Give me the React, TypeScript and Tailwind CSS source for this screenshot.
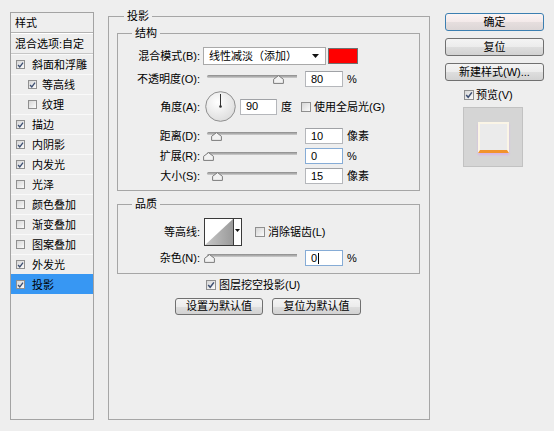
import React from "react";

function Check({ checked, small }: { checked?: boolean; small?: boolean }) {
  return (
    <span
      className={
        (small ? "w-[9px] h-[9px]" : "w-[10px] h-[10px]") +
        " shrink-0 border border-[#8f8f8f] bg-linear-to-br from-[#d6d6d6] to-[#fbfbfb] flex items-center justify-center"
      }
    >
      {checked && (
        <svg width="8" height="8" viewBox="0 0 8 8">
          <path d="M1.2 4 L3.2 6.3 L6.9 1.4" fill="none" stroke="#3d4f72" strokeWidth="1.5" />
        </svg>
      )}
    </span>
  );
}

function Slider({ pos }: { pos: number }) {
  return (
    <div className="relative w-[90px] h-[16px] shrink-0">
      <div className="absolute left-0 right-0 top-[4px] h-[3px] rounded-l-full bg-linear-to-b from-[#8a8a8a] to-[#cfcfcf]" />
      <svg className="absolute top-[4px]" style={{ left: pos }} width="11" height="9" viewBox="0 0 11 9">
        <path d="M5.5 0.6 L10.4 4.3 L10.4 8.4 L0.6 8.4 L0.6 4.3 Z" fill="#f2f2f2" stroke="#7a7a7a" />
      </svg>
    </div>
  );
}

function Box({ v, wide = true, focus, caret }: { v: string; wide?: boolean; focus?: boolean; caret?: boolean }) {
  return (
    <div
      className={
        (wide ? "w-[38px]" : "w-[37px]") +
        " h-[16px] shrink-0 bg-white border pl-[5px] flex items-center leading-none " +
        (focus ? "border-[#86acd6]" : "border-[#b5b7bb] border-t-[#a0a2a6]")
      }
    >
      <span>{v}</span>
      {caret && <span className="w-px h-[11px] bg-black ml-px" />}
    </div>
  );
}

function Btn({ children, w, primary }: { children: React.ReactNode; w: string; primary?: boolean }) {
  return (
    <div
      className={
        w +
        " shrink-0 rounded-[3px] border flex items-center justify-center leading-none " +
        (primary
          ? "border-[#3c7fb1] bg-[linear-gradient(to_bottom,#fbf4f4_0%,#f3e9e9_50%,#e6dede_51%,#dcd6d6_100%)]"
          : "border-[#707070] bg-[linear-gradient(to_bottom,#f4f4f4_0%,#ececec_50%,#dedede_51%,#d2d2d2_100%)]")
      }
    >
      {children}
    </div>
  );
}

const styles: { name: string; checked: boolean; indent?: boolean; selected?: boolean }[] = [
  { name: "斜面和浮雕", checked: true },
  { name: "等高线", checked: true, indent: true },
  { name: "纹理", checked: false, indent: true },
  { name: "描边", checked: true },
  { name: "内阴影", checked: true },
  { name: "内发光", checked: true },
  { name: "光泽", checked: false },
  { name: "颜色叠加", checked: false },
  { name: "渐变叠加", checked: false },
  { name: "图案叠加", checked: false },
  { name: "外发光", checked: true },
  { name: "投影", checked: true, selected: true },
];

export default function App() {
  return (
    <div className="w-[554px] h-[431px] bg-[#eeeeee] flex items-start text-[11px] leading-[14px] text-black font-['Liberation_Sans','Noto_Sans_CJK_SC',sans-serif] overflow-hidden">
      {/* Left styles list */}
      <div className="ml-[10px] mt-[12px] w-[84px] h-[408px] border border-[#a3a3a3] flex flex-col shrink-0">
        <div className="h-[20px] pl-[4px] flex items-center border-b border-[#b2b2b2]">样式</div>
        <div className="h-[21px] pl-[4px] flex items-center border-t border-white border-b border-b-[#c6c6c6]">混合选项:自定</div>
        {styles.map((s) => (
          <div
            key={s.name}
            className={
              "h-[20px] flex items-center border-t " +
              (s.indent ? "pl-[17px] " : "pl-[5px] ") +
              (s.selected ? "bg-[#3797f3] border-[#3797f3]" : "border-[#f9f9f9]")
            }
          >
            <Check checked={s.checked} small />
            <span className={s.indent ? "ml-[5px]" : "ml-[7px]"}>{s.name}</span>
          </div>
        ))}
      </div>

      {/* Main panel */}
      <fieldset className="ml-[14px] mt-[9px] w-[322px] h-[411px] border border-[#a6a6a6] shrink-0 p-0 pl-[8px] pr-[9px]">
        <legend className="ml-[7px] px-[3px] leading-[14px]">投影</legend>

        <fieldset className="mt-[3px] w-[303px] border border-[#a6a6a6] p-0 pb-[6px]">
          <legend className="ml-[14px] px-[3px] leading-[14px]">结构</legend>

          <div className="flex items-center h-[18px] mt-[7px]">
            <span className="w-[82px] text-right shrink-0">混合模式(B):</span>
            <div className="ml-[3px] w-[123px] h-[18px] bg-white border border-[#a9a9a9] flex items-center pl-[5px] pr-[6px] shrink-0">
              <span className="flex-1">线性减淡（添加）</span>
              <svg width="7" height="4" viewBox="0 0 7 4">
                <path d="M0 0 L7 0 L3.5 4 Z" fill="#111" />
              </svg>
            </div>
            <div className="ml-[2px] w-[30px] h-[16px] bg-[#ff0000] border border-[#707070] shrink-0" />
          </div>

          <div className="flex items-center h-[16px] mt-[6px]">
            <span className="w-[82px] text-right shrink-0">不透明度(O):</span>
            <div className="ml-[7px]"><Slider pos={66} /></div>
            <div className="ml-[8px]"><Box v="80" /></div>
            <span className="ml-[4px]">%</span>
          </div>

          <div className="flex items-center h-[31px] mt-[4px]">
            <span className="w-[82px] text-right shrink-0">角度(A):</span>
            <svg className="ml-[5px] shrink-0" width="31" height="31" viewBox="0 0 31 31">
              <defs>
                <radialGradient id="dg" cx="0.4" cy="0.35" r="0.7">
                  <stop offset="0" stopColor="#ffffff" />
                  <stop offset="1" stopColor="#dcdcdc" />
                </radialGradient>
              </defs>
              <circle cx="15.5" cy="15.5" r="14.8" fill="url(#dg)" stroke="#8f8f8f" />
              <line x1="15.5" y1="15.5" x2="15.5" y2="3" stroke="#333" strokeWidth="1" />
              <circle cx="15.5" cy="15.5" r="1.3" fill="#333" />
            </svg>
            <div className="ml-[4px]"><Box v="90" wide={false} /></div>
            <span className="ml-[4px]">度</span>
            <span className="ml-[9px]"><Check /></span>
            <span className="ml-[3px]">使用全局光(G)</span>
          </div>

          <div className="flex items-center h-[16px] mt-[6px]">
            <span className="w-[82px] text-right shrink-0">距离(D):</span>
            <div className="ml-[7px]"><Slider pos={4} /></div>
            <div className="ml-[8px]"><Box v="10" /></div>
            <span className="ml-[4px]">像素</span>
          </div>

          <div className="flex items-center h-[16px] mt-[4px]">
            <span className="w-[82px] text-right shrink-0">扩展(R):</span>
            <div className="ml-[7px]"><Slider pos={-4} /></div>
            <div className="ml-[8px]"><Box v="0" focus /></div>
            <span className="ml-[4px]">%</span>
          </div>

          <div className="flex items-center h-[16px] mt-[4px]">
            <span className="w-[82px] text-right shrink-0">大小(S):</span>
            <div className="ml-[7px]"><Slider pos={5} /></div>
            <div className="ml-[8px]"><Box v="15" /></div>
            <span className="ml-[4px]">像素</span>
          </div>
        </fieldset>

        <fieldset className="mt-[6px] w-[303px] border border-[#a6a6a6] p-0 pb-[7px]">
          <legend className="ml-[14px] px-[3px] leading-[14px]">品质</legend>

          <div className="flex items-center h-[28px] mt-[7px]">
            <span className="w-[82px] text-right shrink-0">等高线:</span>
            <div className="ml-[4px] flex h-[28px] border border-[#3a3a3a] bg-white shrink-0">
              <svg width="28" height="26" viewBox="0 0 28 26" className="border-r border-[#3a3a3a] box-content">
                <defs>
                  <linearGradient id="cg" x1="0" y1="0" x2="1" y2="0">
                    <stop offset="0" stopColor="#c8c8c8" />
                    <stop offset="1" stopColor="#9a9a9a" />
                  </linearGradient>
                </defs>
                <path d="M0 26 L28 0 L28 26 Z" fill="url(#cg)" />
              </svg>
              <div className="w-[7px] flex justify-center pt-[10px]">
                <svg width="5" height="3" viewBox="0 0 5 3">
                  <path d="M0 0 L5 0 L2.5 3 Z" fill="#111" />
                </svg>
              </div>
            </div>
            <span className="ml-[13px]"><Check /></span>
            <span className="ml-[3px]">消除锯齿(L)</span>
          </div>

          <div className="flex items-center h-[16px] mt-[4px]">
            <span className="w-[82px] text-right shrink-0">杂色(N):</span>
            <div className="ml-[7px]"><Slider pos={-3} /></div>
            <div className="ml-[8px]"><Box v="0" focus caret /></div>
            <span className="ml-[4px]">%</span>
          </div>
        </fieldset>

        <div className="flex items-center h-[14px] mt-[4px] pl-[89px]">
          <Check checked />
          <span className="ml-[3px]">图层挖空投影(U)</span>
        </div>

        <div className="flex justify-center gap-[9px] mt-[6px] pr-[1px]">
          <Btn w="w-[88px] h-[17px]">设置为默认值</Btn>
          <Btn w="w-[89px] h-[17px]">复位为默认值</Btn>
        </div>
      </fieldset>

      {/* Right column */}
      <div className="ml-[15px] mt-[13px] w-[99px] flex flex-col shrink-0">
        <Btn w="w-[99px] h-[18px]" primary>确定</Btn>
        <div className="mt-[7px]"><Btn w="w-[99px] h-[18px]">复位</Btn></div>
        <div className="mt-[7px]"><Btn w="w-[99px] h-[18px]">新建样式(W)...</Btn></div>
        <div className="mt-[7px] h-[14px] flex items-center pl-[19px]">
          <Check checked />
          <span className="ml-[2px]">预览(V)</span>
        </div>
        <div className="mt-[5px] ml-[18px] w-[60px] h-[60px] bg-[#d5d5d5] border border-[#c2c2c2] flex items-center justify-center">
          <div className="w-[31px] h-[31px] bg-[#ebebeb] border-[2px] border-[#fbf5e6] border-b-[3px] border-b-[#f1932c] shadow-[0_2px_2px_#d7b6e6]" />
        </div>
      </div>
    </div>
  );
}
